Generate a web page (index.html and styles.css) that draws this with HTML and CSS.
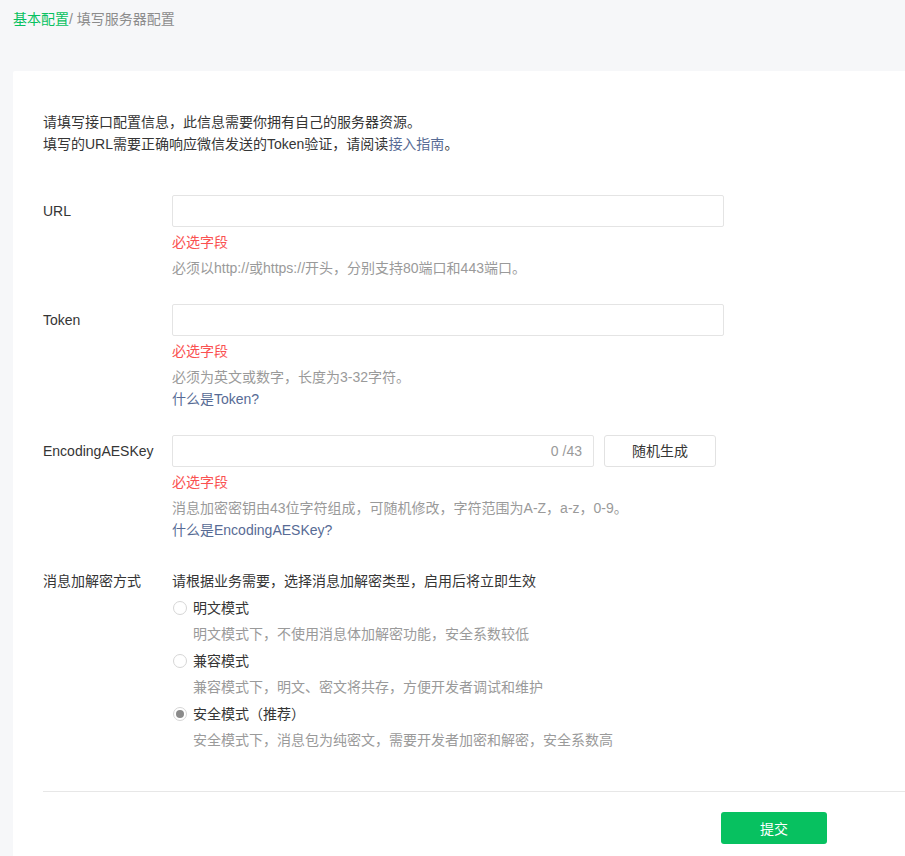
FILE: index.html
```html
<!DOCTYPE html>
<html lang="zh-CN">
<head>
<meta charset="UTF-8">
<meta name="viewport" content="width=device-width, initial-scale=1.0">
<title>填写服务器配置</title>
<link rel="stylesheet" href="styles.css">
</head>
<body>

<div class="breadcrumb">
  <a href="#" class="crumb-link">基本配置</a><span class="crumb-sep">/ 填写服务器配置</span>
</div>

<div class="card">
  <div class="intro">
    <p>请填写接口配置信息，此信息需要你拥有自己的服务器资源。</p>
    <p>填写的URL需要正确响应微信发送的Token验证，请阅读<a href="#" class="link">接入指南</a>。</p>
  </div>

  <form class="config-form">

    <!-- URL -->
    <div class="form-row">
      <label class="form-label" for="url">URL</label>
      <div class="form-field">
        <input type="text" id="url" class="text-input">
        <div class="error">必选字段</div>
        <div class="hint">必须以http://或https://开头，分别支持80端口和443端口。</div>
      </div>
    </div>

    <!-- Token -->
    <div class="form-row">
      <label class="form-label" for="token">Token</label>
      <div class="form-field">
        <input type="text" id="token" class="text-input">
        <div class="error">必选字段</div>
        <div class="hint">必须为英文或数字，长度为3-32字符。</div>
        <a href="#" class="help-link">什么是Token?</a>
      </div>
    </div>

    <!-- EncodingAESKey -->
    <div class="form-row">
      <label class="form-label" for="aeskey">EncodingAESKey</label>
      <div class="form-field">
        <div class="key-line">
          <div class="key-box">
            <input type="text" id="aeskey" maxlength="43">
            <span class="counter">0 /43</span>
          </div>
          <button type="button" class="btn-plain">随机生成</button>
        </div>
        <div class="error">必选字段</div>
        <div class="hint">消息加密密钥由43位字符组成，可随机修改，字符范围为A-Z，a-z，0-9。</div>
        <a href="#" class="help-link">什么是EncodingAESKey?</a>
      </div>
    </div>

    <!-- 加解密方式 -->
    <div class="form-row mode-row">
      <div class="form-label">消息加解密方式</div>
      <div class="form-field">
        <div class="mode-tip">请根据业务需要，选择消息加解密类型，启用后将立即生效</div>

        <label class="radio">
          <input type="radio" name="mode" value="1">
          <span class="radio-dot"></span>
          明文模式
        </label>
        <div class="radio-desc">明文模式下，不使用消息体加解密功能，安全系数较低</div>

        <label class="radio">
          <input type="radio" name="mode" value="2">
          <span class="radio-dot"></span>
          兼容模式
        </label>
        <div class="radio-desc">兼容模式下，明文、密文将共存，方便开发者调试和维护</div>

        <label class="radio">
          <input type="radio" name="mode" value="3" checked>
          <span class="radio-dot"></span>
          安全模式（推荐）
        </label>
        <div class="radio-desc">安全模式下，消息包为纯密文，需要开发者加密和解密，安全系数高</div>
      </div>
    </div>

    <div class="form-footer">
      <button type="submit" class="btn-primary">提交</button>
    </div>

  </form>
</div>

</body>
</html>
```

FILE: styles.css
```css
* {
  box-sizing: border-box;
}
body {
  margin: 0;
  font-family: "Liberation Sans", "Noto Sans CJK SC", sans-serif;
  font-size: 14px;
  color: #353535;
  background: #f6f7f9;
  overflow: hidden;
}
p {
  margin: 0;
}
a {
  text-decoration: none;
}
.breadcrumb {
  padding: 9px 13px 0;
  line-height: 20px;
  height: 71px;
}
.crumb-link {
  color: #07c160;
}
.crumb-sep {
  color: #8c8c8c;
}
.card {
  margin-left: 13px;
  background: #fff;
  border-top-left-radius: 2px;
  padding: 40px 0 40px 30px;
  min-height: 800px;
}
.intro {
  line-height: 22px;
  margin-bottom: 40px;
}
.link,
.help-link {
  color: #576b95;
}
.form-row {
  display: flex;
  margin-bottom: 25px;
}
.form-label {
  width: 129px;
  flex-shrink: 0;
  line-height: 32px;
}
.form-field {
  line-height: 22px;
}
.help-link {
  display: block;
}
.text-input,
.key-box {
  display: block;
  width: 552px;
  height: 32px;
  border: 1px solid #e4e4e4;
  border-radius: 2px;
  background: #fff;
  font: inherit;
  padding: 0 10px;
  outline: none;
}
.key-line {
  display: flex;
  gap: 10px;
}
.key-box {
  width: 422px;
  display: flex;
  align-items: center;
  padding-right: 11px;
}
.key-box input {
  flex: 1;
  min-width: 0;
  border: none;
  outline: none;
  font: inherit;
  padding: 0;
}
.counter {
  color: #9a9a9a;
}
.btn-plain {
  width: 112px;
  height: 32px;
  border: 1px solid #e2e2e2;
  border-radius: 3px;
  background: #fff;
  font: inherit;
  color: #353535;
  cursor: pointer;
}
.error {
  color: #fa5151;
  margin-top: 4px;
}
.hint {
  color: #9a9a9a;
  margin-top: 4px;
}
.mode-row {
  padding-top: 4px;
  margin-bottom: 40px;
}
.mode-row .form-label {
  line-height: 22px;
}
.radio {
  display: flex;
  align-items: center;
  margin-top: 5px;
  cursor: pointer;
}
.radio input {
  display: none;
}
.radio-dot {
  width: 14px;
  height: 14px;
  border: 1px solid #d6d6d6;
  border-radius: 50%;
  margin: 0 6px 0 1px;
  position: relative;
}
.radio input:checked + .radio-dot::after {
  content: "";
  position: absolute;
  left: 2px;
  top: 2px;
  width: 8px;
  height: 8px;
  border-radius: 50%;
  background: #8a8a8a;
}
.radio-desc {
  color: #9a9a9a;
  margin-top: 4px;
  padding-left: 21px;
}
.form-footer {
  border-top: 1px solid #e7e7e7;
  padding: 20px 0 0 678px;
}
.btn-primary {
  width: 106px;
  height: 32px;
  border: none;
  border-radius: 3px;
  background: #07c160;
  color: #fff;
  font: inherit;
  cursor: pointer;
}
.btn-primary:hover {
  background: #06ad56;
}
```
